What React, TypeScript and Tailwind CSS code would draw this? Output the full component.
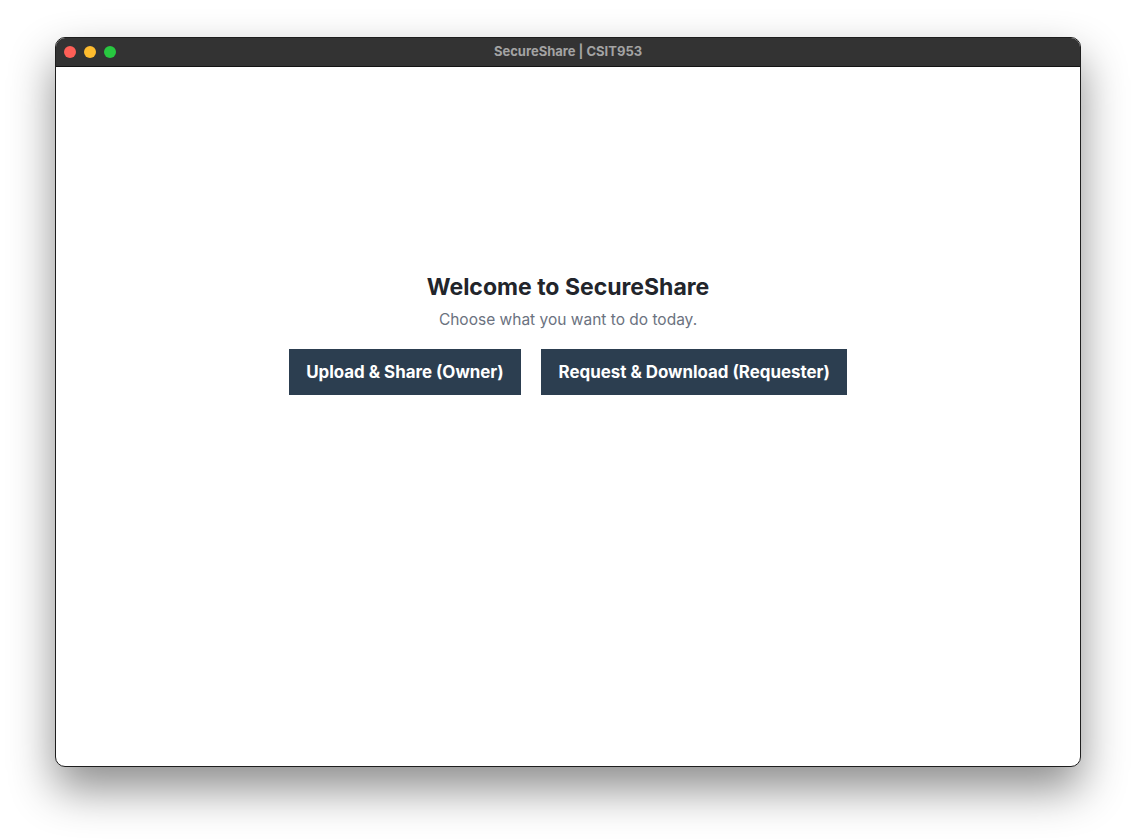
import React from 'react';

const App = () => {
  return (
    <div className="w-[1136px] h-[840px] bg-white pt-[37px] pl-[55px] font-['Inter',sans-serif]">
      <div className="w-[1026px] h-[730px] rounded-[10px] border border-[#1e1e1e] bg-white overflow-hidden flex flex-col shadow-[0_22px_45px_rgba(0,0,0,0.45)]">
        {/* Title bar */}
        <div className="relative h-[29px] bg-[#333333] border-b border-[#141414] flex items-center justify-center shrink-0">
          <div className="absolute left-[8px] top-[8px] flex gap-[8px]">
            <div className="w-[12px] h-[12px] rounded-full bg-[#fe5f57]"></div>
            <div className="w-[12px] h-[12px] rounded-full bg-[#febc2e]"></div>
            <div className="w-[12px] h-[12px] rounded-full bg-[#28c840]"></div>
          </div>
          <span className="text-[13px] font-bold text-[#a3a3a3]">SecureShare | CSIT953</span>
        </div>

        {/* Content */}
        <div className="flex-1 flex flex-col items-center justify-center pb-[162px]">
          <h1 className="text-[23px] font-bold text-[#22252b] leading-none">Welcome to SecureShare</h1>
          <p className="mt-[13px] text-[15.5px] text-[#6b7280] leading-none">Choose what you want to do today.</p>
          <div className="mt-[22px] flex gap-[20px]">
            <button className="h-[46px] px-[17.5px] bg-[#2c3e50] text-white text-[16.9px] font-bold">
              Upload &amp; Share (Owner)
            </button>
            <button className="h-[46px] px-[17.5px] bg-[#2c3e50] text-white text-[16.9px] font-bold">
              Request &amp; Download (Requester)
            </button>
          </div>
        </div>
      </div>
    </div>
  );
};

export default App;
